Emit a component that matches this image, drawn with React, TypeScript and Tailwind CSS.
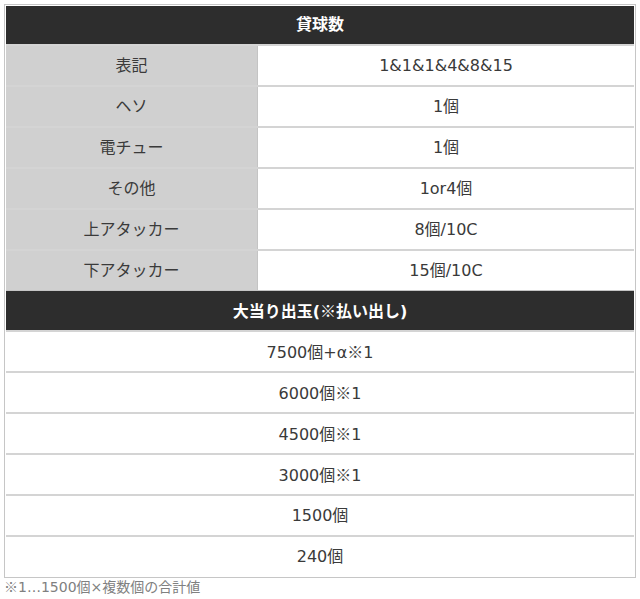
const Mark = () => <span style={{ fontFamily: '"Noto Sans CJK JP", sans-serif' }} className="font-normal">※</span>

const specRows = [
  { label: "表記", value: "1&1&1&4&8&15" },
  { label: "ヘソ", value: "1個" },
  { label: "電チュー", value: "1個" },
  { label: "その他", value: "1or4個" },
  { label: "上アタッカー", value: "8個/10C" },
  { label: "下アタッカー", value: "15個/10C" },
]

const payoutRows = [
  { pre: "7500個+α", note: true },
  { pre: "6000個", note: true },
  { pre: "4500個", note: true },
  { pre: "3000個", note: true },
  { pre: "1500個", note: false },
  { pre: "240個", note: false },
]

export default function App() {
  return (
    <div
      className="w-[640px] h-[599px] bg-white pt-[4px] pl-[4px] text-[#3a3a3a] text-[16px]"
      style={{ fontFamily: '"DejaVu Sans", "Noto Sans CJK JP", sans-serif' }}
    >
      <div className="w-[632px] border border-[#c6c6c6] p-px">
        {/* 貸球数 */}
        <div className="h-[38px] bg-[#2d2d2d] text-white font-bold flex items-center justify-center">
          貸球数
        </div>
        {specRows.map((row) => (
          <div key={row.label} className="grid grid-cols-[252px_1fr] h-[41px] border-t-2 border-[#d4d4d4]">
            <div className="bg-[#d0d0d0] border-r border-[#c4c4c4] flex items-center justify-center">
              {row.label}
            </div>
            <div className="flex items-center justify-center">{row.value}</div>
          </div>
        ))}
        {/* 大当り出玉 */}
        <div className="h-[40px] bg-[#2d2d2d] text-white font-bold flex items-center justify-center border-t border-[#c4c4c4]">
          <span>
            大当り出玉(<span style={{ fontFamily: '"Noto Sans CJK JP", sans-serif' }}>※</span>払い出し)
          </span>
        </div>
        {payoutRows.map((r) => (
          <div key={r.pre} className="h-[41px] border-t-2 border-[#d4d4d4] flex items-center justify-center">
            <span>
              {r.pre}
              {r.note && (
                <>
                  <Mark />1
                </>
              )}
            </span>
          </div>
        ))}
      </div>
      <div className="text-[14px] text-[#808080] leading-[16px]">
        <Mark />1…1500個×複数個の合計値
      </div>
    </div>
  )
}
